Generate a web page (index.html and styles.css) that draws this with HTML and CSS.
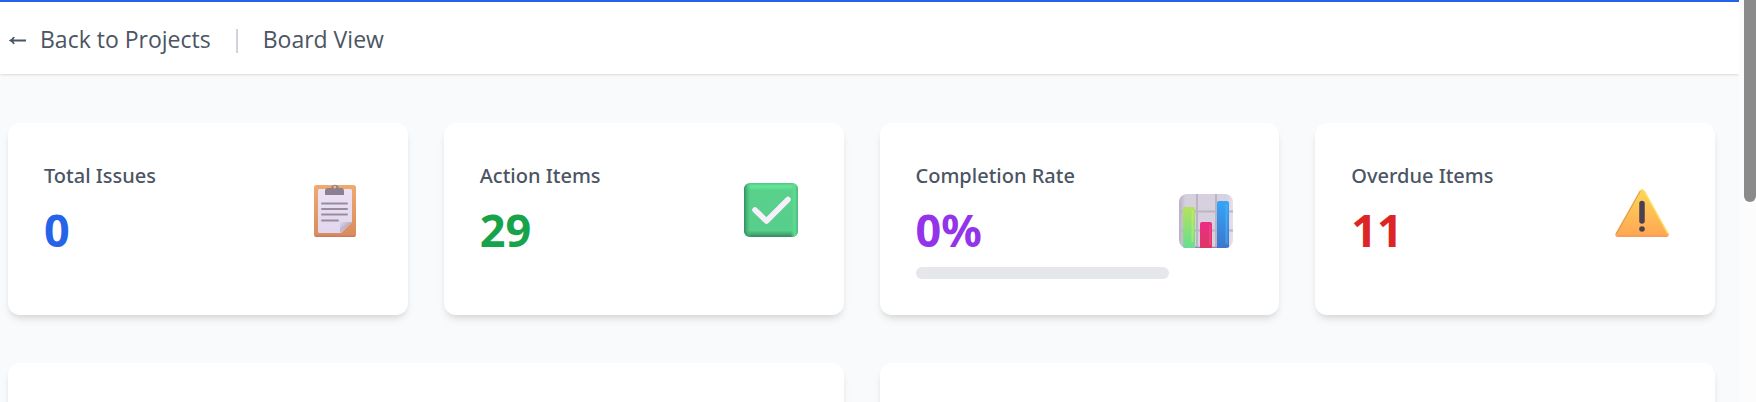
FILE: index.html
```html
<!DOCTYPE html>
<html lang="en">
<head>
<meta charset="utf-8">
<meta name="viewport" content="width=device-width, initial-scale=1">
<title>Project Dashboard</title>
<link rel="stylesheet" href="styles.css">
</head>
<body>
<div class="viewport">
  <div class="page">
    <header class="topbar">
      <nav class="nav">
        <a class="nav-link" href="#projects"><svg class="arrow" viewBox="0 0 18 12" aria-hidden="true"><path d="M17 7.500H2M5 4Q4 6.500 1.500 7.500Q4 8.500 5 11" fill="none" stroke="currentColor" stroke-width="1.800"/></svg>Back to Projects</a>
        <span class="divider"></span>
        <a class="nav-link" href="#board">Board View</a>
      </nav>
    </header>
    <main class="content">
      <section class="stats">
        <article class="card">
          <div class="stat">
            <div class="stat-text">
              <h2 class="label">Total Issues</h2>
              <p class="value blue">0</p>
            </div>
            <div class="icon">
              <svg viewBox="0 0 54 54" aria-hidden="true">
                <defs>
                  <linearGradient id="board" x1="0" y1="0" x2="0" y2="1"><stop offset="0" stop-color="#eeaa70"/><stop offset="1" stop-color="#d98b5c"/></linearGradient>
                  <linearGradient id="sheet" x1="0" y1="0" x2="0" y2="1"><stop offset="0" stop-color="#ebe3f4"/><stop offset="1" stop-color="#e1d6ee"/></linearGradient>
                  <linearGradient id="fold" x1="0" y1="0" x2="1" y2="1"><stop offset="0" stop-color="#e0d8e8"/><stop offset="0.500" stop-color="#b9adc6"/></linearGradient>
                </defs>
                <rect x="6" y="2" width="42" height="52" rx="2.500" fill="url(#board)"/>
                <path d="M7 53.300h40" stroke="#c97b62" stroke-width="1.400"/>
                <path d="M11.500 6h31A1.500 1.500 0 0 1 44 7.500V39L33 50H11.500A1.500 1.500 0 0 1 10 48.500v-41A1.500 1.500 0 0 1 11.500 6z" fill="url(#sheet)"/>
                <path d="M32 39h12L32 50z" fill="url(#fold)"/>
                <path d="M17 12V8q0-3 3-3h3.200a4 4.800 0 0 1 7.600 0H33q3 0 3 3v4z" fill="#8d7f8f"/>
                <circle cx="26.800" cy="4" r="1.500" fill="#e8b78e"/>
                <path d="M14 20.500h25M14 26h25M14 31.500h25M14 37.500h16" stroke="#988d9f" stroke-width="2" stroke-linecap="round"/>
              </svg>
            </div>
          </div>
        </article>
        <article class="card">
          <div class="stat">
            <div class="stat-text">
              <h2 class="label">Action Items</h2>
              <p class="value green">29</p>
            </div>
            <div class="icon">
              <svg viewBox="0 0 54 54" aria-hidden="true">
                <defs>
                  <linearGradient id="side" x1="0" y1="0" x2="1" y2="0"><stop offset="0" stop-color="#2f8b5c"/><stop offset="0.140" stop-color="#59d18b" stop-opacity="0"/><stop offset="0.860" stop-color="#59d18b" stop-opacity="0"/><stop offset="0.940" stop-color="#60dc93"/><stop offset="1" stop-color="#4ab87c"/></linearGradient>
                  <linearGradient id="ends" x1="0" y1="0" x2="0" y2="1"><stop offset="0" stop-color="#4fc783"/><stop offset="0.060" stop-color="#65e69a"/><stop offset="0.140" stop-color="#59d18b"/><stop offset="0.880" stop-color="#57cf8c"/><stop offset="1" stop-color="#35885f"/></linearGradient>
                </defs>
                <rect width="54" height="54" rx="6" fill="url(#ends)"/>
                <rect width="54" height="54" rx="6" fill="url(#side)"/>
                <path d="M11 27l11.500 11L44 16.500" fill="none" stroke="#f8effc" stroke-width="5.500" stroke-linecap="round" stroke-linejoin="round"/>
              </svg>
            </div>
          </div>
        </article>
        <article class="card">
          <div class="stat">
            <div class="stat-text">
              <h2 class="label">Completion Rate</h2>
              <p class="value purple">0%</p>
              <div class="track" role="progressbar" aria-label="Completion Rate" aria-valuenow="0" aria-valuemin="0" aria-valuemax="100"><div class="fill" style="width: 0%"></div></div>
            </div>
            <div class="icon">
              <svg viewBox="0 0 54 54" aria-hidden="true">
                <defs>
                  <linearGradient id="plate" x1="0" y1="0" x2="1" y2="0"><stop offset="0" stop-color="#b9b0c2"/><stop offset="0.120" stop-color="#d6cfdd"/><stop offset="0.880" stop-color="#d8d1df"/><stop offset="1" stop-color="#eadfed"/></linearGradient>
                  <linearGradient id="lime" x1="0" y1="0" x2="0" y2="1"><stop offset="0" stop-color="#b5e25c"/><stop offset="1" stop-color="#66de91"/></linearGradient>
                  <linearGradient id="pink" x1="0" y1="0" x2="0" y2="1"><stop offset="0" stop-color="#ec2c85"/><stop offset="1" stop-color="#dc3864"/></linearGradient>
                  <linearGradient id="sky" x1="0" y1="0" x2="0" y2="1"><stop offset="0" stop-color="#36a5f7"/><stop offset="1" stop-color="#3b76cc"/></linearGradient>
                  <clipPath id="plate-clip"><rect width="54" height="54" rx="8"/></clipPath>
                </defs>
                <g clip-path="url(#plate-clip)">
                  <rect width="54" height="54" fill="url(#plate)"/>
                  <path d="M18 0v54M37 0v54M0 17.500h54M0 36.500h54" stroke="#bcb4c2" stroke-width="2"/>
                  <path d="M0 53.500h54" stroke="#a979c0" stroke-width="1.500"/>
                  <path d="M4 54V15q0-2 2-2h8q2 0 2 2v39z" fill="url(#lime)"/>
                  <path d="M13.500 16v32" stroke="#c6f56c" stroke-width="2" opacity="0.500"/>
                  <path d="M21 54V30q0-2 2-2h8q2 0 2 2v24z" fill="url(#pink)"/>
                  <path d="M31 31v20" stroke="#f7518c" stroke-width="2" opacity="0.500"/>
                  <path d="M38 54V9q0-2 2-2h8q2 0 2 2v45z" fill="url(#sky)"/>
                  <path d="M47.500 10v40" stroke="#55bbff" stroke-width="2" opacity="0.500"/>
                </g>
              </svg>
            </div>
          </div>
        </article>
        <article class="card">
          <div class="stat">
            <div class="stat-text">
              <h2 class="label">Overdue Items</h2>
              <p class="value red">11</p>
            </div>
            <div class="icon">
              <svg viewBox="0 0 54 54" aria-hidden="true">
                <defs>
                  <linearGradient id="amber" x1="0" y1="0" x2="0" y2="1"><stop offset="0" stop-color="#fdd657"/><stop offset="1" stop-color="#ffa653"/></linearGradient>
                </defs>
                <path d="M25 7.500q2-3 4 0L53.500 50.500q1 3.500-2 3.500h-49q-3 0-2-3.500z" fill="url(#amber)"/>
                <path d="M25 8.500L1.500 50.500" stroke="#dfa04f" stroke-width="1.200" stroke-linecap="round"/>
                <path d="M29.500 8.500L52.500 50" stroke="#ffe064" stroke-width="1.500" stroke-linecap="round"/>
                <path d="M2 53h50" stroke="#f19b63" stroke-width="1.500"/>
                <path d="M27 20.500v17.500" stroke="#4b4051" stroke-width="5.500" stroke-linecap="round"/>
                <circle cx="27" cy="46" r="2.800" fill="#4b4051"/>
              </svg>
            </div>
          </div>
        </article>
      </section>
      <section class="panels">
        <div class="card"></div>
        <div class="card"></div>
      </section>
    </main>
  </div>
  <div class="scrollbar" aria-hidden="true"><div class="thumb"></div></div>
</div>
</body>
</html>
```
FILE: styles.css
```css
* {
  box-sizing: border-box;
}

body {
  margin: 0;
  overflow: hidden;
  background: #f9fafb;
  color: #4b5563;
  font-family: "Segoe UI", "Noto Sans", "Open Sans", sans-serif;
}

h2,
p {
  margin: 0;
}

.viewport {
  display: flex;
  height: 100vh;
  overflow: hidden;
}

.page {
  flex: 1;
  min-width: 0;
}

.topbar {
  padding: 19px 9px 17px;
  background: #fff;
  border-top: 2px solid #2563eb;
  box-shadow: 0 1px 3px rgba(0, 0, 0, 0.1), 0 1px 2px -1px rgba(0, 0, 0, 0.1);
}

.nav {
  display: flex;
  align-items: center;
  gap: 25px;
}

.nav-link {
  display: flex;
  align-items: center;
  gap: 13px;
  color: #4b5563;
  font-family: "Segoe UI", "Open Sans", "Noto Sans", sans-serif;
  font-size: 23px;
  line-height: 36px;
  text-decoration: none;
}

.arrow {
  width: 18px;
  height: 12px;
}

.divider {
  width: 2px;
  height: 24px;
  margin-top: 4px;
  background: #d1d5db;
}

.content {
  display: grid;
  gap: 48px;
  padding: 49px 24px 48px 8px;
}

.stats,
.panels {
  display: grid;
  grid-template-columns: repeat(4, 1fr);
  gap: 36px;
}

.panels {
  grid-template-columns: repeat(2, 1fr);
}

.card {
  padding: 36px;
  background: #fff;
  border-radius: 12px;
  box-shadow: 0 6px 9px -2px rgba(0, 0, 0, 0.1), 0 3px 6px -3px rgba(0, 0, 0, 0.1);
}

.panels .card {
  min-height: 400px;
}

.stat {
  display: flex;
  align-items: center;
}

.stat-text {
  flex: 1;
}

.label {
  margin-bottom: 10px;
  font-size: 20px;
  font-weight: 500;
  line-height: 34px;
}

.value {
  font-size: 45px;
  font-weight: 700;
  line-height: 54px;
}

.blue {
  color: #2563eb;
}

.green {
  color: #16a34a;
}

.purple {
  color: #9333ea;
}

.red {
  color: #dc2626;
}

.track {
  height: 12px;
  margin-top: 10px;
  overflow: hidden;
  background: #e5e7eb;
  border-radius: 6px;
}

.fill {
  height: 100%;
  background: #9333ea;
}

.icon {
  display: flex;
  justify-content: center;
  width: 74px;
  padding-top: 4px;
}

.icon svg {
  width: 54px;
  height: 54px;
}

.scrollbar {
  width: 17px;
  padding-left: 5px;
  background: #fcfcfc;
}

.thumb {
  height: 202px;
  background: #8b8b8b;
  border-radius: 0 0 6px 6px;
}
```
